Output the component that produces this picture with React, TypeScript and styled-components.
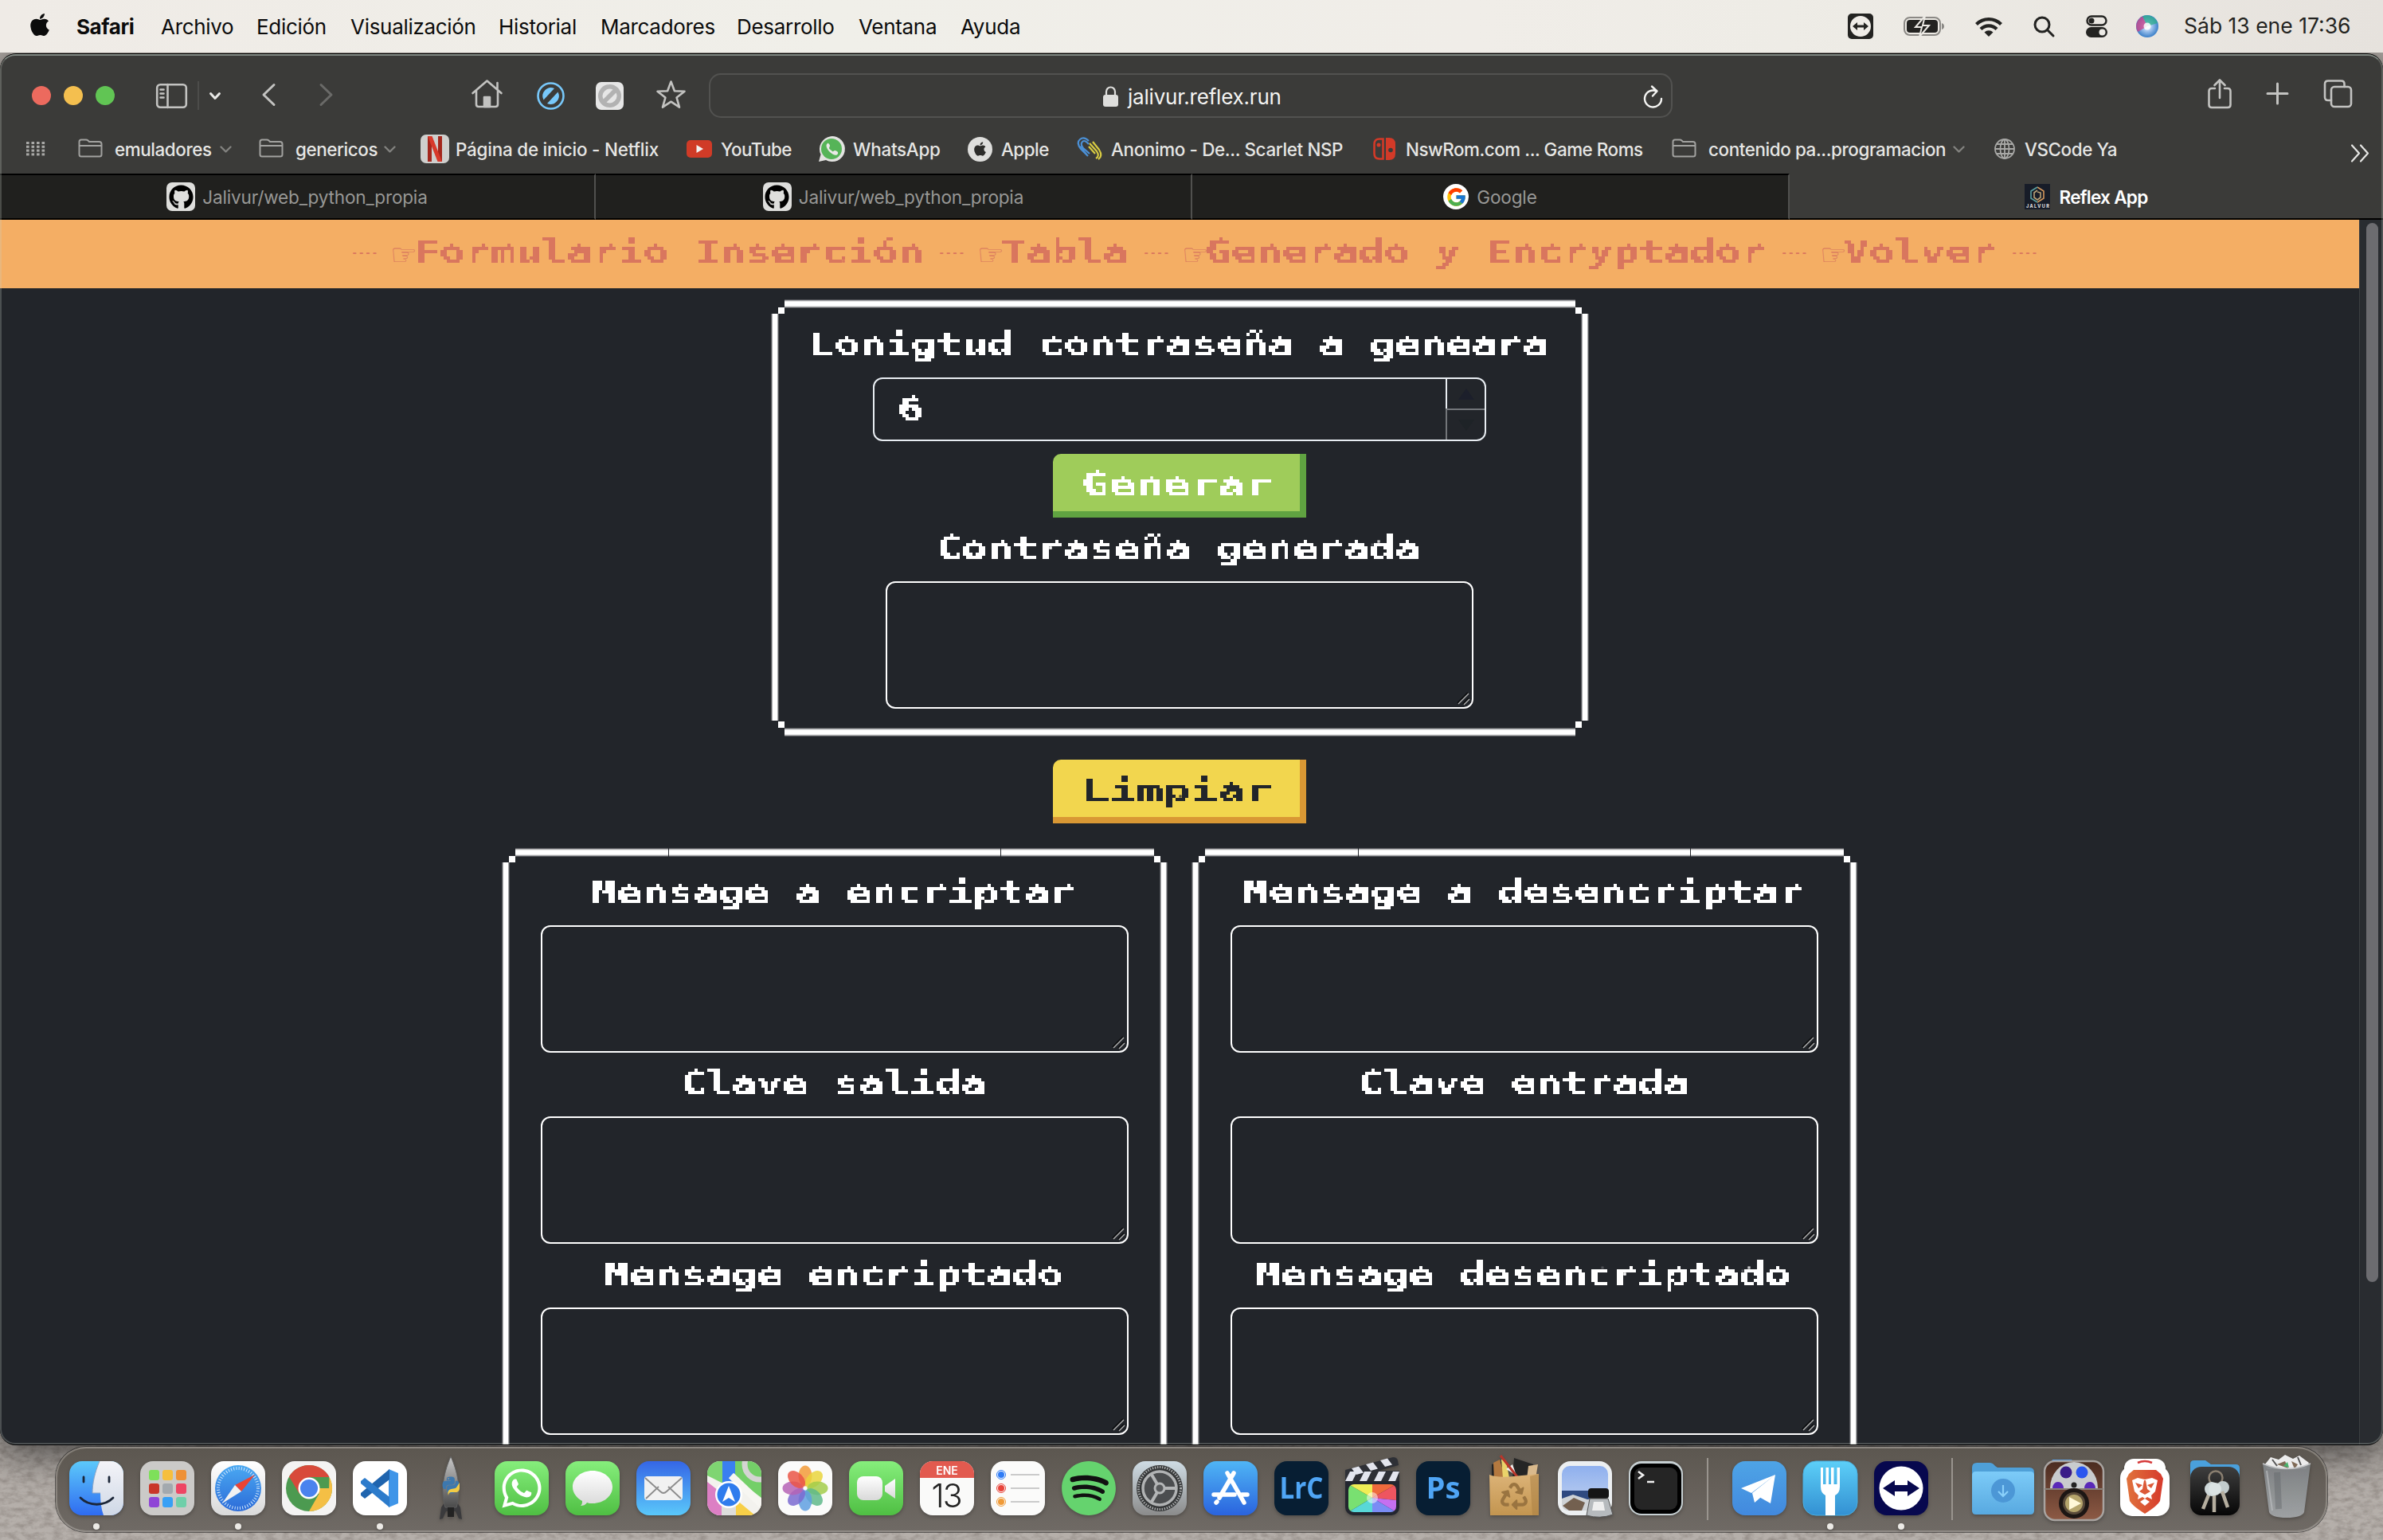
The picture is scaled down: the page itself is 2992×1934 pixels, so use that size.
import React from "react";
import styled, { createGlobalStyle } from "styled-components";
import { FaApple, FaGithub, FaWhatsapp, FaPython, FaSpotify, FaRecycle } from "react-icons/fa";
import { FcGoogle } from "react-icons/fc";

const Global = createGlobalStyle`
  * { box-sizing: border-box; }
  html, body { margin: 0; padding: 0; background: #8f8a85; }
  body { width: 2992px; height: 1934px; overflow: hidden; }
  svg { display: block; flex: none; overflow: visible; }
`;

/* ---------- desktop ---------- */

const Desktop = styled.div`
  position: relative;
  display: flex;
  flex-direction: column;
  width: 2992px;
  height: 1934px;
  overflow: hidden;
  background: #a29d98;
  font-family: Inter, "Liberation Sans", sans-serif;
`;

const Wallpaper = styled.svg`
  position: absolute;
  left: 0;
  top: 0;
  width: 2992px;
  height: 1934px;
`;

const MenuBar = styled.header`
  position: relative;
  z-index: 2;
  display: flex;
  align-items: center;
  flex: none;
  height: 66px;
  padding: 0 33px 0 34px;
  background: linear-gradient(90deg, #efebe6 0%, #f0efe9 35%, #f0ede8 62%, #eeece6 75%, #e6e2dd 100%);
  color: #0b0b0b;
  font-size: 26px;
`;

const MenuItem = styled.span<{ $w: number; $bold?: boolean }>`
  width: ${(p) => p.$w}px;
  font-weight: ${(p) => (p.$bold ? 700 : 400)};
  letter-spacing: ${(p) => (p.$bold ? -0.4 : -0.3)}px;
  white-space: nowrap;
`;

const AppleMark = styled.span`
  display: flex;
  width: 62px;
  padding-bottom: 4px;
`;

const Status = styled.div`
  display: flex;
  align-items: center;
  margin-left: auto;
  color: #232321;
`;

const StatusIcon = styled.span<{ $gap: number }>`
  display: flex;
  margin-right: ${(p) => p.$gap}px;
`;

const Clock = styled.span`
  width: 217px;
  padding-bottom: 2px;
  font-size: 26.5px;
  white-space: nowrap;
`;

/* ---------- browser window ---------- */

const Window = styled.section`
  position: relative;
  display: flex;
  flex-direction: column;
  flex: none;
  width: 2992px;
  height: 1748px;
  margin-top: 1px;
  border: 1px solid #000;
  border-width: 1px 0;
  border-radius: 20px;
  overflow: hidden;
  background: #3b3b39;
  box-shadow: 0 8px 50px 4px rgba(0, 0, 0, 0.6);
  &::after {
    content: "";
    position: absolute;
    inset: 0;
    border: 2px solid rgba(200, 210, 200, 0.25);
    border-top-color: rgba(200, 215, 205, 0.5);
    border-radius: 19px;
    pointer-events: none;
  }
`;

const Chrome = styled.div`
  display: flex;
  flex-direction: column;
  flex: none;
  height: 208px;
`;

const Toolbar = styled.div`
  display: flex;
  align-items: center;
  height: 104px;
  padding: 0 39px 0 40px;
  color: #c3c3c1;
`;

const Lights = styled.div`
  display: flex;
  gap: 16px;
  margin-right: 52px;
`;

const Light = styled.i<{ $c: string }>`
  width: 24px;
  height: 24px;
  border-radius: 50%;
  background: ${(p) => p.$c};
`;

const ToolDivider = styled.i`
  width: 2px;
  height: 36px;
  margin: 0 13px;
  background: #4c4c4a;
`;

const Tool = styled.span<{ $r: number; $c?: string; $up?: number }>`
  display: flex;
  margin-right: ${(p) => p.$r}px;
  padding-bottom: ${(p) => p.$up ?? 0}px;
  color: ${(p) => p.$c ?? "#c3c3c1"};
`;

const UrlField = styled.div`
  display: flex;
  align-items: center;
  width: 1210px;
  height: 56px;
  padding: 2px 10px 0 493px;
  border: 2px solid #525250;
  border-radius: 15px;
  color: #f4f4f2;
  font-size: 26px;
  letter-spacing: -0.2px;
`;

const UrlText = styled.span`
  flex: 1;
  padding-left: 12px;
`;

const RightTools = styled.div`
  display: flex;
  align-items: center;
  gap: 44px;
  margin-left: auto;
  padding-bottom: 5px;
`;

const Bookmarks = styled.div`
  display: flex;
  align-items: center;
  height: 30px;
  padding: 0 16px 0 33px;
  color: #e6e6e4;
  font-size: 22.4px;
  font-weight: 500;
`;

const Bookmark = styled.div<{ $w: number; $gap: number }>`
  display: flex;
  align-items: center;
  gap: ${(p) => p.$gap}px;
  width: ${(p) => p.$w}px;
  white-space: nowrap;
`;

const BookmarkLabel = styled.span<{ $ls?: number }>`
  margin-right: auto;
  letter-spacing: ${(p) => p.$ls ?? -0.25}px;
`;

const FolderLabel = styled.span<{ $w: number }>`
  width: ${(p) => p.$w}px;
  letter-spacing: -0.4px;
`;

const Overflow = styled.span`
  display: flex;
  margin-left: auto;
  padding-top: 10px;
`;

const Tabs = styled.div`
  display: grid;
  grid-template-columns: 748px 749px 750px 1fr;
  height: 58px;
  margin-top: auto;
`;

const Tab = styled.div<{ $active?: boolean; $gap?: number }>`
  display: flex;
  align-items: center;
  justify-content: center;
  gap: ${(p) => p.$gap ?? 9}px;
  border-top: 2px solid ${(p) => (p.$active ? "#3b3b39" : "#000")};
  border-bottom: 2px solid #000;
  border-right: ${(p) => (p.$active ? "0" : "2px solid #50504e")};
  background: ${(p) => (p.$active ? "#3b3b39" : "#20201e")};
  color: ${(p) => (p.$active ? "#ffffff" : "#979795")};
  font-size: 22.6px;
  font-weight: ${(p) => (p.$active ? 600 : 400)};
  letter-spacing: ${(p) => (p.$active ? -0.75 : -0.2)}px;
  white-space: nowrap;
`;

const TabBadge = styled.span<{ $round?: boolean }>`
  display: flex;
  align-items: center;
  justify-content: center;
  width: ${(p) => (p.$round ? 32 : 36)}px;
  height: ${(p) => (p.$round ? 32 : 36)}px;
  border-radius: ${(p) => (p.$round ? "50%" : "7px")};
  background: ${(p) => (p.$round ? "#fff" : "#dededc")};
  color: #000;
`;

const Viewport = styled.div`
  display: flex;
  flex: 1;
  min-height: 0;
`;

const ScrollTrack = styled.div`
  width: 30px;
  padding: 4px 6px 0 8px;
  background: #292c30;
  border-left: 1px solid #3b3e41;
`;

const ScrollThumb = styled.div`
  width: 15px;
  height: 1330px;
  border-radius: 8px;
  background: #6c6c70;
`;

/* ---------- page ---------- */

const Page = styled.main`
  display: flex;
  flex-direction: column;
  align-items: center;
  width: 2962px;
  overflow: hidden;
  background: #22252a;
`;

const Nav = styled.nav`
  display: flex;
  align-items: center;
  flex: none;
  width: 100%;
  height: 86px;
  margin-bottom: 14px;
  padding: 0 0 10px 424px;
  background: #f4ae64;
  color: #d9765e;
`;

const Dashes = styled.span`
  flex: none;
  width: 33px;
  margin: 8px 19px 0 17px;
  font: 700 14px "Liberation Mono", monospace;
  white-space: nowrap;
`;

const Hand = styled.span`
  flex: none;
  width: 31px;
  margin-left: -3px;
  padding-top: 12px;
  font: 38px/1 "DejaVu Sans", sans-serif;
`;

const PixelCell = styled.span<{ $n: number; $adv: number }>`
  display: flex;
  justify-content: center;
  flex: none;
  width: ${(p) => p.$n * p.$adv}px;
  height: 44px;
  margin-bottom: -4px;
  filter: url(#pixels);
`;

const PixelGlyphs = styled.span<{ $adv: number }>`
  flex: none;
  font: 700 38.4px/40px "DejaVu Sans Mono", "Liberation Mono", monospace;
  white-space: pre;
  transform: translate(-2px, 1.5px) scaleX(${(p) => p.$adv / 23.12});
`;

function Pixel({ children, adv = 32 }: { children: string; adv?: number }) {
  return (
    <PixelCell $n={children.length} $adv={adv}>
      <PixelGlyphs $adv={adv}>{children}</PixelGlyphs>
    </PixelCell>
  );
}

const hBar =
  "linear-gradient(180deg,#55575b 0 1px,#a8a9ab 1px 2px,#e4e4e4 2px 3px,#fff 3px 8px,#e4e4e4 8px 9px,#a8a9ab 9px 10px,#55575b 10px 11px)";
const vBar = "linear-gradient(90deg,#55575b 0 1px,#a8a9ab 1px 2px,#fff 2px 8px,#a8a9ab 8px 9px,#55575b 9px 10px)";
const dot = "linear-gradient(#fff,#fff)";
const seam = "linear-gradient(#22252a,#22252a)";

const Panel = styled.div<{ $w: number; $h: number; $seams?: boolean }>`
  display: flex;
  flex-direction: column;
  align-items: center;
  flex: none;
  width: ${(p) => p.$w}px;
  height: ${(p) => p.$h}px;
  padding-top: ${(p) => (p.$seams ? 17 : 18)}px;
  color: #fff;
  background-repeat: no-repeat;
  background-image: ${(p) => (p.$seams ? `${seam}, ${seam}, ` : "")}${dot}, ${dot}, ${dot}, ${dot}, ${hBar}, ${hBar}, ${vBar}, ${vBar};
  background-size: ${(p) => (p.$seams ? "1px 11px, 1px 11px, " : "")}8px 8px, 8px 8px, 8px 8px, 8px 8px,
    calc(100% - 34px) 11px, calc(100% - 34px) 11px, 10px calc(100% - 38px), 10px calc(100% - 38px);
  background-position: ${(p) => (p.$seams ? "left 209px top 0, left 626px top 0, " : "")}left 9px top 10px,
    right 9px top 10px, left 9px bottom 11px, right 9px bottom 11px, left 17px top 0, left 17px bottom 0,
    left 0 top 18px, right 0 top 18px;
`;

const Heading = styled.h3`
  flex: none;
  height: 40px;
  margin: 16px 0 24px;
`;

const NumberField = styled.div`
  display: grid;
  grid-template-columns: 1fr 49px;
  flex: none;
  width: 770px;
  height: 80px;
  border: 2px solid #e8edf2;
  border-radius: 12px;
  overflow: hidden;
`;

const NumberValue = styled.div`
  display: flex;
  align-items: center;
  padding: 0 0 4px 31px;
`;

const Steppers = styled.div`
  display: grid;
  grid-template-rows: 37px 1fr;
`;

const Stepper = styled.span<{ $dim?: boolean }>`
  display: flex;
  align-items: center;
  justify-content: center;
  border-left: 2px solid ${(p) => (p.$dim ? "#73767a" : "#e8edf2")};
  border-top: ${(p) => (p.$dim ? "2px solid #73767a" : "0")};
`;

const PixelButton = styled.button<{ $bg: string; $edge: string; $fg: string; $m: string }>`
  display: flex;
  align-items: center;
  justify-content: center;
  flex: none;
  width: 318px;
  height: 80px;
  margin: ${(p) => p.$m};
  padding: 0 4px 8px 0;
  border: 0;
  border-radius: 10px 0 0 0;
  background: ${(p) => p.$bg};
  color: ${(p) => p.$fg};
  box-shadow: inset -8px -8px 0 ${(p) => p.$edge};
`;

const TextBox = styled.div`
  display: flex;
  align-items: flex-end;
  justify-content: flex-end;
  flex: none;
  width: 738px;
  height: 160px;
  padding: 1px;
  border: 2px solid #fff;
  border-radius: 12px;
`;

const Columns = styled.div`
  display: flex;
  gap: 30px;
`;

/* ---------- dock ---------- */

const Dock = styled.footer`
  position: relative;
  display: flex;
  flex: none;
  width: 2852px;
  height: 107px;
  margin: 2px 0 0 70px;
  padding-left: 4px;
  border: 2px solid rgba(165, 160, 152, 0.55);
  border-bottom-color: rgba(150, 146, 140, 0.9);
  border-radius: 38px;
  background: linear-gradient(180deg, #5c5750 0%, #66605a 50%, #6f6a65 100%);
  box-shadow: 0 0 0 1px rgba(20, 20, 20, 0.55);
`;

const Slot = styled.div`
  display: flex;
  flex-direction: column;
  align-items: center;
  flex: none;
  width: 89px;
  padding-top: 16px;
  filter: drop-shadow(0 2px 2px rgba(0, 0, 0, 0.25));
`;

const RunDot = styled.i`
  width: 8px;
  height: 8px;
  margin-top: 10px;
  border-radius: 50%;
  background: #eceae6;
`;

const DockRule = styled.i<{ $w: number }>`
  display: flex;
  justify-content: center;
  flex: none;
  width: ${(p) => p.$w}px;
  padding-top: 12px;
  &::before {
    content: "";
    width: 2px;
    height: 78px;
    background: #99948e;
  }
`;

/* ---------- drawings ---------- */

type Kids = { children?: React.ReactNode };

const Line = ({ w, h, sw = 2.6, children }: Kids & { w: number; h: number; sw?: number }) => (
  <svg width={w} height={h} viewBox={`0 0 ${w} ${h}`} fill="none" stroke="currentColor" strokeWidth={sw} strokeLinecap="round" strokeLinejoin="round">
    {children}
  </svg>
);

const FolderIcon = () => (
  <svg width="31" height="24" viewBox="0 0 31 24" fill="none" stroke="#a2a2a0" strokeWidth="2">
    <path d="M1.500 20V4q0-2.500 2.500-2.500h6q1.500 0 2.500 1l1.500 1.500h12.500q3 0 3 3V20q0 2.500-2.500 2.500H4q-2.500 0-2.500-2.500zM1.500 9h28" />
  </svg>
);

const Chevron = () => (
  <svg width="15" height="9" viewBox="0 0 15 9" fill="none" stroke="#82827f" strokeWidth="2.400" strokeLinecap="round" strokeLinejoin="round">
    <path d="M1.500 1.500l6 6 6-6" />
  </svg>
);

const Grip = () => (
  <svg width="18" height="18" viewBox="0 0 18 18" strokeWidth="1.400">
    <path d="M1 14L14 1M8 15L15 8" stroke="#0c0d0f" strokeWidth="2" />
    <path d="M2 15L15 2M9 16L16 9" stroke="#b6b6b6" />
  </svg>
);

const Tile = ({ fill, stroke, children }: Kids & { fill: string; stroke?: string }) => (
  <svg width="68" height="68" viewBox="0 0 68 68">
    <rect width="68" height="68" rx="16" fill={fill} stroke={stroke} />
    {children}
  </svg>
);

const ramps = [
  ["gGreen", "#86ee7c", "#4fbf43"], ["gBlue", "#3566e6", "#5ac8fa"], ["gSky", "#5cc9fb", "#2f6bf0"], ["gSafari", "#4aa9f2", "#2c6bd8"],
  ["gWhite", "#ffffff", "#d9d9d9"], ["gStore", "#4fb5f5", "#2a63de"], ["gGear", "#cfdce4", "#8b8b8b"], ["gTele", "#4ea4e6", "#4289de"],
  ["gFork", "#5ccff8", "#3390d2"], ["gBrown", "#4a2b20", "#8d5a45"], ["gKeys", "#3e3e3e", "#060606"], ["gBag", "#dcb377", "#c39550"],
  ["gFolder", "#7ccbf8", "#58a9e0"], ["gFace", "#f4f4f8", "#cfd8e6"], ["gSea", "#8fb0ee", "#c4d4f0"], ["gSteel", "#7f8386", "#a2a5a7"],
  ["gRocket", "#c9c9c9", "#4a4a4a"],
];

const Defs = () => (
  <defs>
    {ramps.map(([id, a, b]) => (
      <linearGradient key={id} id={id} x1="0" y1="0" x2="0" y2="1">
        <stop offset="0" stopColor={a} />
        <stop offset="1" stopColor={b} />
      </linearGradient>
    ))}
    <linearGradient id="gBrave" x1="0" y1="0" x2="1" y2="0">
      <stop offset="0" stopColor="#e0733c" />
      <stop offset="1" stopColor="#d63a2c" />
    </linearGradient>
    <radialGradient id="gSiri">
      <stop offset="0" stopColor="#fff" />
      <stop offset=".4" stopColor="#a8c8f0" />
      <stop offset="1" stopColor="#3a7fc8" />
    </radialGradient>
    <clipPath id="tile"><rect width="68" height="68" rx="16" /></clipPath>
    <clipPath id="fcp"><rect x="4" y="29" width="60" height="35" rx="7" /></clipPath>
    <filter id="grain" x="0" y="0" width="100%" height="100%">
      <feTurbulence type="fractalNoise" baseFrequency="0.09 0.16" numOctaves="4" seed="5" />
      <feColorMatrix values="0 0 0 0 0.25  0 0 0 0 0.22  0 0 0 0 0.20  0.9 0.9 0 0 -0.72" />
    </filter>
    {/* Snaps the lettering to the 4px blocks of an 8-bit typeface. */}
    <filter id="pixels" x="0" y="0" width="1" height="1" colorInterpolationFilters="sRGB">
      <feGaussianBlur in="SourceGraphic" stdDeviation="0.7" result="soft" />
      <feFlood x="1" y="1" width="1" height="1" floodColor="#000" result="point" />
      <feComposite in="point" in2="point" operator="over" x="0" y="0" width="4" height="4" />
      <feTile result="grid" />
      <feComposite in="soft" in2="grid" operator="in" />
      <feComponentTransfer><feFuncA type="linear" slope="60" intercept="-27" /></feComponentTransfer>
      <feMorphology operator="dilate" radius="1" result="block" />
      <feOffset in="block" dx="1" dy="0" result="right" />
      <feOffset in="block" dx="0" dy="1" result="down" />
      <feOffset in="block" dx="1" dy="1" result="diag" />
      <feMerge>
        <feMergeNode in="block" />
        <feMergeNode in="right" />
        <feMergeNode in="down" />
        <feMergeNode in="diag" />
      </feMerge>
    </filter>
  </defs>
);

const Finder = () => (
  <Tile fill="url(#gSky)">
    <g clipPath="url(#tile)"><path d="M38 0C32 14 29 28 29 40h10c0 10 1 20 4 28h25V0z" fill="url(#gFace)" /></g>
    <path d="M38 0C32 14 29 28 29 40h10" fill="none" stroke="#8fa6c4" />
    <path d="M18 20v6M50 20v6M14 46c11 11 30 11 41 0" fill="none" stroke="#1b2638" strokeWidth="2.800" strokeLinecap="round" />
  </Tile>
);
const Launchpad = () => (
  <Tile fill="#cbcac8">
    {["#7ee05a", "#f6bf3e", "#ee9136", "#c93628", "#a3a9ae", "#ee4563", "#8f45d6", "#37a0f5", "#6fcfa9"].map((c, i) => (
      <rect key={c} x={11 + (i % 3) * 17} y={11 + Math.floor(i / 3) * 17} width="13" height="13" rx="3" fill={c} />
    ))}
  </Tile>
);
const Safari = () => (
  <Tile fill="url(#gWhite)">
    <circle cx="34" cy="34" r="29" fill="url(#gSafari)" />
    <circle cx="34" cy="34" r="25" fill="none" stroke="#cfe6fb" strokeWidth="4" strokeDasharray="1 2.270" />
    <path d="M55 17L38 38 30 30z" fill="#ea4335" />
    <path d="M14 53L38 38 30 30z" fill="#f2f2f2" />
  </Tile>
);
const ChromeIcon = () => (
  <Tile fill="#f4f3f2">
    <circle cx="34" cy="34" r="29" fill="#4c9a50" />
    <path d="M34 34h25.100L59.500 20A29 29 0 0 1 34 63l12.500-22z" fill="#f4bf45" />
    <path d="M34 20h25.500A29 29 0 0 0 9 19.500L22 41z" fill="#d84a3a" />
    <circle cx="34" cy="34" r="13.500" fill="#fff" />
    <circle cx="34" cy="34" r="11" fill="#4a83ee" />
  </Tile>
);
const Code = () => (
  <Tile fill="#fff">
    <path d="M45 10L57 15V53L45 58z" fill="#3f95e8" />
    <path d="M46 10v13L15 47l-5-4V40z" fill="#1f64ae" />
    <path d="M46 58V45L15 21l-5 4v3z" fill="#2c7bcb" />
  </Tile>
);
const Rocket = () => (
  <svg width="68" height="68" viewBox="0 0 68 68">
    <path d="M22 58l-2 15 4-1 4-9h12l4 9 4 1-2-15-6-9H28z" fill="#3a3a3c" />
    <path d="M34-6C26 12 20 36 27 58h14C48 36 42 12 34-6z" fill="url(#gRocket)" stroke="#5f5f5f" />
    <g transform="translate(22 18)"><FaPython size={24} color="#3d78ae" /></g>
    <path d="M45 27v7c0 3-2 5-5 5h-5c-3 0-4 2-4 4-1-3-1-5 1-7 3-2 8-1 9-3z" fill="#f2cb45" />
    <path d="M30 58h8v12h-8z" fill="#222" />
  </svg>
);
const WhatsApp = () => (
  <Tile fill="url(#gGreen)"><g transform="translate(6 6)"><FaWhatsapp size={56} color="#fff" /></g></Tile>
);
const Messages = () => (
  <Tile fill="url(#gGreen)">
    <path d="M34 12c14 0 25 9 25 20.500S48 53 34 53c-3 0-5 0-7-1-2 3-5 4-8 4 2-2 2-4 2-6C14 46 9 40 9 32.500 9 21 20 12 34 12z" fill="url(#gWhite)" />
  </Tile>
);
const Mail = () => (
  <Tile fill="url(#gBlue)">
    <rect x="10" y="19" width="48" height="30" rx="4" fill="#f1f1f1" />
    <path d="M12 47l16-15M56 47L40 32M11 21l19 17q4 4 8 0l19-17" fill="none" stroke="#8c8c8c" strokeWidth="1.800" />
  </Tile>
);
const Maps = () => (
  <Tile fill="#f3f2ee">
    <g clipPath="url(#tile)">
      <path d="M0 0h20v28L0 18z" fill="#7fd572" />
      <path d="M34 0h34v46L34 20z" fill="#74cf68" />
      <path d="M0 26l18 14v28H0z" fill="#dc7fc4" />
      <path d="M36 48l24 20H36z" fill="#f7cf48" />
      <path d="M18 40h18v28H18z" fill="#dddddb" />
      <path d="M19 0h16v30H19z" fill="#3a7ff0" />
      <circle cx="66" cy="4" r="19" fill="none" stroke="#d4d4d2" strokeWidth="7" />
      <path d="M30 18l42 40" stroke="#f7f6f2" strokeWidth="9" />
    </g>
    <circle cx="27" cy="42" r="17" fill="#fff" />
    <circle cx="27" cy="42" r="14.500" fill="#2f7ced" />
    <path d="M27 31l8 20-8-5-8 5z" fill="#fff" />
  </Tile>
);
const Photos = () => (
  <Tile fill="#fbfbfa">
    {["#f29b38", "#e9d53c", "#a3cc4a", "#5fb98a", "#5f9fe0", "#7a6ad0", "#b563b5", "#ea5545"].map((c, i) => (
      <ellipse key={c} cx="34" cy="18.500" rx="8.500" ry="13" fill={c} opacity=".85" transform={`rotate(${i * 45} 34 34)`} />
    ))}
  </Tile>
);
const FaceTime = () => (
  <Tile fill="url(#gGreen)">
    <rect x="10" y="19" width="32" height="30" rx="8" fill="url(#gWhite)" />
    <path d="M45 31l13-9v25l-13-9z" fill="url(#gWhite)" />
  </Tile>
);
const Calendar = () => (
  <Tile fill="#fafaf9">
    <g clipPath="url(#tile)"><rect width="68" height="21" fill="#e25a4f" /></g>
    <text x="34" y="16.500" fill="#fff" fontSize="14" fontWeight="600" textAnchor="middle" fontFamily="Inter">ENE</text>
    <text x="33" y="58" fill="#222" fontSize="41" fontWeight="300" textAnchor="middle" fontFamily="Inter" letterSpacing="-2">13</text>
  </Tile>
);
const Reminders = () => (
  <Tile fill="#fbfbfa">
    {["#2f7cf6", "#e8443a", "#f09a37"].map((c, i) => (
      <g key={c}>
        <circle cx="13" cy={17 + i * 17} r="4" fill={c} />
        <circle cx="13" cy={17 + i * 17} r="5.500" fill="none" stroke={c} />
        <path d={`M25 ${17 + i * 17}h36`} stroke="#bbb" strokeWidth="1.600" />
      </g>
    ))}
  </Tile>
);
const Spotify = () => (
  <svg width="68" height="68" viewBox="0 0 68 68">
    <circle cx="34" cy="34" r="33" fill="#111" />
    <g transform="translate(-1 -1)"><FaSpotify size={70} color="#65d36e" /></g>
  </svg>
);
const Settings = () => (
  <Tile fill="url(#gGear)">
    <circle cx="34" cy="34" r="29" fill="#333536" />
    <circle cx="34" cy="34" r="26.500" fill="none" stroke="#a7a9aa" strokeWidth="3" strokeDasharray="1.500 1.600" />
    <circle cx="34" cy="34" r="21" fill="#4b4d4f" stroke="#b0b2b3" strokeWidth="3.500" />
    <path d="M34 34h20M34 34L24 17M34 34L24 51" stroke="#b4b6b7" strokeWidth="4" />
    <circle cx="34" cy="34" r="6" fill="#585a5c" stroke="#b4b6b7" strokeWidth="3" />
  </Tile>
);
const AppStore = () => (
  <Tile fill="url(#gStore)">
    <path d="M38 15L20 46M30 15l21 37M13 42h26M48 42h7M17 51l-1 1" stroke="#fff" strokeWidth="5.500" strokeLinecap="round" />
  </Tile>
);
const Adobe = ({ label }: { label: string }) => (
  <Tile fill="#071e33">
    <text x="34" y="47" fill="#4fa5f5" fontSize="38" fontWeight="700" textAnchor="middle" fontFamily="Open Sans" textLength={label.length === 3 ? 55 : 43} lengthAdjust="spacingAndGlyphs">
      {label}
    </text>
  </Tile>
);
const FinalCut = () => (
  <svg width="68" height="68" viewBox="0 0 68 68">
    <rect y="12" width="68" height="56" rx="10" fill="#23262f" />
    <path d="M0 11L60-5q5 0 6 4l1 6L3 23z" fill="#2e3036" />
    <path d="M0 12h68v13H0z" fill="#2e3036" />
    <path d="M8 9l9-2.500 6 8-9 2.500zM26 4l9-2.500 6 8-9 2.500zM44-1l9-2.500 6 8-9 2.500zM6 13h9l-6 12H0zM24 13h9l-6 12h-9zM42 13h9l-6 12h-9zM60 13h8l-5 12h-9z" fill="#e3e5ee" />
    <g clipPath="url(#fcp)">
      <path d="M34 46L4 29v35z" fill="#79e071" /><path d="M34 46L4 29h30z" fill="#f0ee55" /><path d="M34 46V29h30z" fill="#ef6a3c" />
      <path d="M34 46l30-17v20z" fill="#ee5560" /><path d="M34 46l30 3v15z" fill="#c56ff0" /><path d="M34 46l30 18H34z" fill="#7a8cf5" />
      <path d="M34 46v18H4z" fill="#58d8d8" />
      <circle cx="34" cy="46" r="7" fill="#fff" opacity=".5" />
    </g>
  </svg>
);
const Bag = () => (
  <svg width="68" height="68" viewBox="0 0 68 68">
    <path d="M6 4l12-3 4 20H6zM34-4l24 8-4 18H32z" fill="#252525" />
    <path d="M8 2l8-4 7 24H9z" fill="#b4793f" /><path d="M18-2l6 1 4 22h-8z" fill="#ead36a" />
    <path d="M24 10l8-6 5 14z" fill="#f0f0f0" /><path d="M52 6l12-2-3 18H50z" fill="#d9b98c" />
    <path d="M17-7l22 28" stroke="#b9362b" strokeWidth="3" />
    <path d="M3 17q10 4 31 2t31-3v52H4z" fill="url(#gBag)" />
    <path d="M54 19l11-3v52h-8z" fill="#a87d42" opacity=".5" />
    <g transform="translate(17 27)"><FaRecycle size={34} color="#9a7440" /></g>
  </svg>
);
const Preview = () => (
  <Tile fill="#eceff1">
    <rect x="5" y="6" width="58" height="56" rx="10" fill="url(#gSea)" />
    <rect x="5" y="37" width="58" height="12" fill="#2f4a80" />
    <path d="M5 47l14-5 18 6 26-3v8q0 9-9 9H14q-9 0-9-9z" fill="#cfd3d6" />
    <path d="M6 56l14-10 14 6-4 10H14z" fill="#73604f" />
    <rect x="38" y="34" width="26" height="13" rx="4" fill="#151515" />
    <path d="M40 47h23l6 20q-16 6-33 1z" fill="#b6babd" stroke="#555" />
    <path d="M45 51h12l2 11H43z" fill="#eee" />
  </Tile>
);
const Terminal = () => (
  <Tile fill="#c7d0d3">
    <rect x="2" y="3" width="64" height="63" rx="14" fill="#000" />
    <rect x="7" y="8" width="54" height="53" rx="9" fill="#252525" />
    <path d="M12 13l6 4.500-6 4.500M23 26h9" fill="none" stroke="#f2f2f2" strokeWidth="2.600" />
  </Tile>
);
const Telegram = () => (
  <Tile fill="url(#gTele)">
    <path d="M54 17L11 34l13 6zM54 17L25 40l23 13zM54 17L25 40l3 12 7-6z" fill="#fff" />
  </Tile>
);
const Fork = () => (
  <Tile fill="url(#gFork)" stroke="#4ab0e2">
    <path d="M22 8v24q0 8 6 11V68h12V43q6-3 6-11V8h-3.500v21h-4V8h-3.500v21h-3V8h-3.500v21h-3.500V8z" fill="#fff" />
  </Tile>
);
const Viewer = () => (
  <Tile fill="#07084e">
    <circle cx="34" cy="34" r="27.500" fill="#fff" />
    <path d="M11 34l15-10v6h16v-6l15 10-15 10v-6H26v6z" fill="#07084e" />
  </Tile>
);
const Downloads = () => (
  <svg width="78" height="68" viewBox="0 0 78 68">
    <path d="M0 62V8q0-6 6-6h16q4 0 7 4l3 2h40q6 0 6 6v48z" fill="#4fa0d8" />
    <path d="M0 18q0-5 5-5h68q5 0 5 5v44q0 5-5 5H5q-5 0-5-5z" fill="url(#gFolder)" />
    <circle cx="39" cy="37" r="15" fill="#4c97d6" />
    <path d="M39 30v13m-6-5l6 6 6-6" fill="none" stroke="#8ad0fa" strokeWidth="2.200" />
  </svg>
);
const Film = () => (
  <svg width="74" height="68" viewBox="0 0 74 68">
    <path d="M10-2h24l4 5H8z" fill="#4b9ff0" />
    <rect width="74" height="74" rx="13" fill="url(#gBrown)" stroke="#a8a3a0" strokeWidth="2.500" />
    <path d="M7 34a30 33 0 0 1 60 0z" fill="#c9ccce" />
    <circle cx="27" cy="14" r="7.500" fill="#3a1c88" /><circle cx="47" cy="14" r="7.500" fill="#2a55ee" />
    <path d="M10 34a7 8 0 0 1 14 0zM50 34a7 8 0 0 1 14 0z" fill="#5a29b8" /><circle cx="37" cy="30" r="3.500" fill="#222" />
    <path d="M0 35h74" stroke="#888078" strokeWidth="2" />
    <circle cx="37" cy="53" r="19" fill="#1d1614" /><circle cx="37" cy="53" r="14" fill="#5a4b3a" /><circle cx="37" cy="53" r="11" fill="#b6a56c" />
    <path d="M31 45l15 8-15 8z" fill="#fff8d8" />
  </svg>
);
const Brave = () => (
  <svg width="62" height="68" viewBox="0 0 62 68">
    <rect x="5" y="-3" width="52" height="40" rx="12" fill="#fff" />
    <path d="M22 2q9-4 18 0" stroke="#d63a3a" strokeWidth="2.500" fill="none" />
    <rect y="6" width="62" height="63" rx="15" fill="#fff" />
    <path d="M17 11h28l6 5 3 6-4 28q-3 6-19 16Q15 56 12 50L8 22l3-6z" fill="url(#gBrave)" />
    <path d="M15 24l7-3 9 2 9-2 7 3-3 14-5 5 1 5-6-3-3 2-3-2-6 3 1-5-5-5zM25 51l6-4 6 4-6 5z" fill="#fff" />
    <path d="M19 27l9 3-5 4zM43 27l-9 3 5 4zM30 24h2l2 11 4 3-7 4-7-4 4-3z" fill="#dc5a38" />
  </svg>
);
const Keys = () => (
  <svg width="63" height="68" viewBox="0 0 63 68">
    <path d="M0 50V4q0-5 5-5h14l7 5h31q5 0 5 5v41z" fill="#4aa0dc" />
    <rect y="7" width="62" height="61" rx="14" fill="url(#gKeys)" />
    <circle cx="32" cy="21" r="8.500" fill="none" stroke="#8a7f70" strokeWidth="2.500" />
    <circle cx="41" cy="33" r="8" fill="#c2cccd" />
    <path d="M24 40l-8 20M30 42v22M40 38l7 20" stroke="#b5ae9f" strokeWidth="4.500" />
    <circle cx="27" cy="35" r="9" fill="#cfd9da" /><circle cx="31" cy="35" r="8" fill="#dbe3e3" />
  </svg>
);
const Trash = () => (
  <svg width="60" height="68" viewBox="0 0 60 68">
    <path d="M2 5l8-10 10 3 8-6 10 5 8-4 12 9-4 8H6z" fill="#ececec" />
    <path d="M18 4l10-4 4 9zM36 0l8 4-4 6z" fill="#7f6a56" /><path d="M26 6l5-5 2 7z" fill="#48b06a" />
    <path d="M12-2l6 8M44-5l4 10" stroke="#555" strokeWidth="2" />
    <path d="M0 3q30 13 60 0L52 64q-3 7-22 7T8 64z" fill="url(#gSteel)" opacity=".95" />
    <path d="M0 3q30 13 60 0" stroke="#c4c6c8" strokeWidth="1.500" fill="none" />
    <path d="M5 12L12 62" stroke="#c0c2c4" strokeWidth="2" opacity=".6" />
    <path d="M18 14l2 46" stroke="#5f6366" strokeWidth="8" opacity=".4" />
  </svg>
);

/* ---------- composed parts ---------- */

const NavLink = ({ children }: { children: string }) => (
  <>
    <Dashes>----</Dashes>
    <Hand>☞</Hand>
    <Pixel>{children}</Pixel>
  </>
);

const Field = ({ label }: { label: string }) => (
  <>
    <Heading><Pixel>{label}</Pixel></Heading>
    <TextBox><Grip /></TextBox>
  </>
);

const FolderMark = ({ label, w, tw }: { label: string; w: number; tw: number }) => (
  <Bookmark $w={w} $gap={0}>
    <Tool $r={15} $up={2}><FolderIcon /></Tool>
    <FolderLabel $w={tw}>{label}</FolderLabel>
    <Chevron />
  </Bookmark>
);

const SiteMark = ({ label, w, gap, ls, icon }: { label: string; w: number; gap: number; ls?: number; icon: React.ReactNode }) => (
  <Bookmark $w={w} $gap={gap}>
    {icon}
    <BookmarkLabel $ls={ls}>{label}</BookmarkLabel>
  </Bookmark>
);

const GitHubTab = () => (
  <Tab>
    <TabBadge><FaGithub size={31} /></TabBadge>
    Jalivur/web_python_propia
  </Tab>
);

type App = { icon: React.ReactNode; running?: boolean };

const mainApps: App[] = [
  { icon: <Finder />, running: true }, { icon: <Launchpad /> }, { icon: <Safari />, running: true }, { icon: <ChromeIcon /> },
  { icon: <Code />, running: true }, { icon: <Rocket /> }, { icon: <WhatsApp /> }, { icon: <Messages /> }, { icon: <Mail /> },
  { icon: <Maps /> }, { icon: <Photos /> }, { icon: <FaceTime /> }, { icon: <Calendar /> }, { icon: <Reminders /> }, { icon: <Spotify /> },
  { icon: <Settings /> }, { icon: <AppStore /> }, { icon: <Adobe label="LrC" /> }, { icon: <FinalCut /> }, { icon: <Adobe label="Ps" /> },
  { icon: <Bag /> }, { icon: <Preview /> }, { icon: <Terminal /> },
];
const recentApps: App[] = [{ icon: <Telegram /> }, { icon: <Fork />, running: true }, { icon: <Viewer />, running: true }];
const stacks: App[] = [{ icon: <Downloads /> }, { icon: <Film /> }, { icon: <Brave /> }, { icon: <Keys /> }, { icon: <Trash /> }];

const slots = (apps: App[]) =>
  apps.map((a, i) => (
    <Slot key={i}>
      {a.icon}
      {a.running && <RunDot />}
    </Slot>
  ));

export default function App() {
  return (
    <Desktop>
      <Global />
      <Wallpaper>
        <Defs />
        <rect width="2992" height="1934" fill="#b5afaa" />
        <rect y="1780" width="2992" height="154" filter="url(#grain)" />
      </Wallpaper>

      <MenuBar>
        <AppleMark><FaApple size={32} /></AppleMark>
        <MenuItem $w={106} $bold>Safari</MenuItem>
        <MenuItem $w={120}>Archivo</MenuItem>
        <MenuItem $w={118}>Edición</MenuItem>
        <MenuItem $w={186}>Visualización</MenuItem>
        <MenuItem $w={128}>Historial</MenuItem>
        <MenuItem $w={171}>Marcadores</MenuItem>
        <MenuItem $w={153}>Desarrollo</MenuItem>
        <MenuItem $w={128}>Ventana</MenuItem>
        <MenuItem $w={90}>Ayuda</MenuItem>
        <Status>
          <StatusIcon $gap={38}>
            <svg width="32" height="32" viewBox="0 0 32 32">
              <rect width="32" height="32" rx="5" fill="#232321" />
              <circle cx="16" cy="16" r="13" fill="#efece7" />
              <path d="M6 16l6-5v3.500h8V11l6 5-6 5v-3.500h-8V21z" fill="#232321" />
            </svg>
          </StatusIcon>
          <StatusIcon $gap={38}>
            <svg width="52" height="24" viewBox="0 0 52 24">
              <rect x="1" y="1" width="45" height="22" rx="7" fill="none" stroke="#8b8985" strokeWidth="2" />
              <rect x="4" y="4" width="39" height="16" rx="4" fill="#232321" />
              <path d="M48 8q3 1 3 4t-3 4z" fill="#8b8985" />
              <path d="M27-1L15 13h8l-3 12 12-14h-8z" fill="#232321" stroke="#eceae5" strokeWidth="2" />
            </svg>
          </StatusIcon>
          <StatusIcon $gap={39}>
            <svg width="34" height="25" viewBox="0 0 34 25" fill="none" stroke="#232321" strokeWidth="4.200">
              <path d="M1.500 9.500a22 22 0 0 1 31 0M7 15.500a14 14 0 0 1 20 0" />
              <path d="M17 25l-5.500-5.500a8 8 0 0 1 11 0z" fill="#232321" stroke="none" />
            </svg>
          </StatusIcon>
          <StatusIcon $gap={39}>
            <Line w={27} h={26} sw={3}><circle cx="11" cy="11" r="9" /><path d="M18 18l7 7" /></Line>
          </StatusIcon>
          <StatusIcon $gap={36}>
            <svg width="27" height="28" viewBox="0 0 27 28">
              <rect x="1.500" y="1.500" width="24" height="11" rx="5.500" fill="none" stroke="#232321" strokeWidth="2.400" />
              <circle cx="7" cy="7" r="3.500" fill="#232321" />
              <rect y="15" width="27" height="13" rx="6.500" fill="#232321" />
              <circle cx="20.500" cy="21.500" r="4" fill="#eceae5" />
            </svg>
          </StatusIcon>
          <StatusIcon $gap={32}>
            <svg width="28" height="28" viewBox="0 0 28 28">
              <circle cx="14" cy="14" r="14" fill="url(#gSiri)" />
              <path d="M8 1.400A14 14 0 0 1 27 10L14 14z" fill="#2fae8c" opacity=".75" />
              <path d="M2 21A14 14 0 0 1 8 1.400L14 14z" fill="#cf3f86" opacity=".75" />
              <circle cx="14" cy="14" r="4.500" fill="#fff" opacity=".85" />
            </svg>
          </StatusIcon>
          <Clock>Sáb 13 ene 17:36</Clock>
        </Status>
      </MenuBar>

      <Window>
        <Chrome>
          <Toolbar>
            <Lights><Light $c="#ec6a5e" /><Light $c="#f4bf4f" /><Light $c="#61c554" /></Lights>
            <Line w={39} h={31}><rect x="1.200" y="1.200" width="36.600" height="28.600" rx="4" /><path d="M14.500 1v29M5.500 7.500h4M5.500 12.500h4M5.500 17.500h4" /></Line>
            <ToolDivider />
            <Tool $r={52} $c="#e8e8e6"><Line w={14} h={9} sw={3}><path d="M1.500 1.500L7 7.500l5.500-6" /></Line></Tool>
            <Tool $r={55} $up={2}><Line w={17} h={28} sw={3}><path d="M15 1.500L2 14l13 12.500" /></Line></Tool>
            <Tool $r={174} $up={2} $c="#6a6a68"><Line w={17} h={28} sw={3}><path d="M2 1.500L15 14 2 26.500" /></Line></Tool>
            <Tool $r={43} $up={5}>
              <Line w={39} h={35}>
                <path d="M1.500 17L19.500 1.500 37.500 17M6 14v17q0 3 3 3h21q3 0 3-3V14M32.500 12V4" />
                <path d="M16 34V22h7v12z" fill="currentColor" />
              </Line>
            </Tool>
            <Tool $r={39}>
              <svg width="35" height="35" viewBox="0 0 35 35" fill="none" stroke="#78c8fa" strokeWidth="2.600">
                <circle cx="17.500" cy="17.500" r="16" />
                <path d="M8.500 22.500A10.500 10.500 0 0 1 22 8zM26.500 12.500A10.500 10.500 0 0 1 13 27z" fill="#78c8fa" stroke="none" />
              </svg>
            </Tool>
            <Tool $r={41}>
              <svg width="35" height="35" viewBox="0 0 35 35">
                <rect width="35" height="35" rx="7" fill="#e6e6e6" />
                <circle cx="17.500" cy="17.500" r="14.500" fill="#b2b2b2" />
                <path d="M9.500 21.500A9 9 0 0 1 21.500 9.500zM25.500 13.500A9 9 0 0 1 13.500 25.500z" fill="#e6e6e6" />
              </svg>
            </Tool>
            <Tool $r={29} $up={4}>
              <Line w={37} h={35}><path d="M18.500 1.500l4.400 11.800 12.600.5-9.900 7.800 3.400 12.100-10.500-7-10.500 7 3.400-12.100-9.900-7.800 12.600-.5z" /></Line>
            </Tool>
            <UrlField>
              <svg width="19" height="26" viewBox="0 0 19 26">
                <rect y="11" width="19" height="15" rx="3" fill="#dededc" />
                <path d="M4 12V7a5.500 5.500 0 0 1 11 0v5" fill="none" stroke="#dededc" strokeWidth="2.200" />
              </svg>
              <UrlText>jalivur.reflex.run</UrlText>
              <Line w={25} h={28} sw={2.4}><path d="M17 7.500A10.500 10.500 0 1 0 23 17M11 1.500l6.500 6-5.500 6" /></Line>
            </UrlField>
            <RightTools>
              <Line w={30} h={38}><path d="M9 12H5q-3.500 0-3.500 3.500v17Q1.500 36 5 36h20q3.500 0 3.500-3.500v-17Q28.500 12 25 12h-4M15 24V2M8.500 8L15 1.500 21.500 8" /></Line>
              <Line w={27} h={27} sw={3}><path d="M13.500 1v25M1 13.500h25" /></Line>
              <Line w={36} h={35}><rect x="10" y="9" width="25" height="25" rx="4" /><path d="M10 26H6q-4 0-4-4V5.500q0-4 4-4h16.500q4 0 4 4V9" /></Line>
            </RightTools>
          </Toolbar>

          <Bookmarks>
            <Tool $r={41}>
              <svg width="24" height="18" viewBox="0 0 24 18" fill="#a8a8a6">
                {[0, 1, 2, 3].flatMap((c) => [0, 1, 2, 3].map((r) => <rect key={`${c}${r}`} x={c * 6.5} y={r * 4.8} width="3.600" height="3" />))}
              </svg>
            </Tool>
            <FolderMark label="emuladores" w={227} tw={132} />
            <FolderMark label="genericos" w={203} tw={111} />
            <SiteMark label="Página de inicio - Netflix" w={334} gap={8} ls={-0.2} icon={
              <svg width="36" height="36" viewBox="0 0 36 36">
                <rect width="36" height="36" rx="7" fill="#cfcfcd" />
                <path d="M9 2h5v32H9zM22 2h5v32h-5z" fill="#a3271d" />
                <path d="M9 2h5.500L27 34h-5.500z" fill="#d8392b" />
              </svg>} />
            <SiteMark label="YouTube" w={166} gap={11} ls={-0.6} icon={
              <svg width="32" height="22" viewBox="0 0 32 22"><rect width="32" height="22" rx="5" fill="#d03b27" /><path d="M12.500 6l8.500 5-8.500 5z" fill="#f2f2f2" /></svg>} />
            <SiteMark label="WhatsApp" w={187} gap={11} icon={
              <svg width="32" height="32" viewBox="0 0 32 32">
                <path d="M0 32l2.500-9A16 16 0 1 1 9 30z" fill="#e3e3e1" />
                <circle cx="16" cy="16" r="13" fill="#56b458" />
                <path d="M11 9c-3 2-1 7 3 11s9 5 10 2-3-4-4-4-2 2-3 1-4-3-4-4 1-2 1-3-2-4-3-3z" fill="#e9e9e7" />
              </svg>} />
            <SiteMark label="Apple" w={138} gap={11} ls={-0.5} icon={
              <svg width="31" height="31" viewBox="0 0 31 31">
                <circle cx="15.500" cy="15.500" r="15.500" fill="#dededc" />
                <g transform="translate(5.500 5)"><FaApple size={20} color="#2c2c2a" /></g>
              </svg>} />
            <SiteMark label="Anonimo - De... Scarlet NSP" w={371} gap={11} ls={-0.35} icon={
              <svg width="31" height="30" viewBox="0 0 31 30" fill="none" strokeWidth="2.200">
                <path d="M14 5Q8-1 3 3t1 12l9 9M14 9Q9 3 6 6t1 8l8 7M3 12l9 11" stroke="#4b90d6" />
                <path d="M15 8l9 10q4 6-1 9M19 6l8 10q5 8-1 12M14 12l8 9" stroke="#d8cb42" />
              </svg>} />
            <SiteMark label="NswRom.com ... Game Roms" w={375} gap={13} ls={-0.45} icon={
              <svg width="28" height="28" viewBox="0 0 28 28">
                <path d="M12.500 1.500H8Q1.500 1.500 1.500 8v12q0 6.500 6.500 6.500h4.500z" fill="none" stroke="#d23a28" strokeWidth="2.600" />
                <circle cx="7" cy="9" r="2.500" fill="#d23a28" />
                <path d="M16 0h4q8 0 8 8v12q0 8-8 8h-4z" fill="#d23a28" />
                <circle cx="22" cy="15.500" r="2.800" fill="#3b3b39" />
              </svg>} />
            <FolderMark label="contenido pa...programacion" w={405} tw={307} />
            <SiteMark label="VSCode Ya" w={200} gap={12} ls={-0.4} icon={
              <svg width="26" height="26" viewBox="0 0 26 26" fill="none" stroke="#a8a8a6" strokeWidth="1.800">
                <circle cx="13" cy="13" r="12" /><ellipse cx="13" cy="13" rx="5.500" ry="12" /><path d="M13 1v24M1 13h24M3 7h20M3 19h20" />
              </svg>} />
            <Overflow><Line w={25} h={23} sw={2.2}><path d="M2 1.500l9 10-9 10M13 1.500l9 10-9 10" /></Line></Overflow>
          </Bookmarks>

          <Tabs>
            <GitHubTab />
            <GitHubTab />
            <Tab $gap={10}><TabBadge $round><FcGoogle size={27} /></TabBadge>Google</Tab>
            <Tab $active $gap={11}>
              <svg width="32" height="32" viewBox="0 0 32 32">
                <rect width="32" height="32" fill="#171c28" />
                <g fill="none" strokeWidth="1.600">
                  <path d="M16 4l8 5v9l-8 5" stroke="#d2955a" /><path d="M16 4L8 9v9l8 5" stroke="#5a9fa0" /><path d="M16 8l-4 3v6l4 3 4-3v-6l-4-1" stroke="#b9a176" />
                </g>
                <text x="16" y="29.500" fill="#e8e8e8" fontSize="5.500" fontWeight="700" textAnchor="middle" fontFamily="Inter" textLength="28">JALVUR</text>
              </svg>
              Reflex App
            </Tab>
          </Tabs>
        </Chrome>

        <Viewport>
          <Page>
            <Nav>
              <NavLink>Formulario Inserción</NavLink>
              <NavLink>Tabla</NavLink>
              <NavLink>Generado y Encryptador</NavLink>
              <NavLink>Volver</NavLink>
              <Dashes>----</Dashes>
            </Nav>
            <Panel $w={1027} $h={549}>
              <Heading><Pixel>Lonigtud contraseña a geneara</Pixel></Heading>
              <NumberField>
                <NumberValue><Pixel>6</Pixel></NumberValue>
                <Steppers>
                  <Stepper><svg width="20" height="14" viewBox="0 0 20 14"><path d="M0 14L10 0l10 14z" fill="#1c1f2b" /></svg></Stepper>
                  <Stepper $dim><svg width="20" height="14" viewBox="0 0 20 14"><path d="M0 0l10 14L20 0z" fill="#1e2327" /></svg></Stepper>
                </Steppers>
              </NumberField>
              <PixelButton $bg="#9fcc5a" $edge="#60a341" $fg="#fff" $m="16px 0 0"><Pixel adv={34}>Generar</Pixel></PixelButton>
              <Field label="Contraseña generada" />
            </Panel>
            <PixelButton $bg="#f2d64e" $edge="#d99834" $fg="#22252a" $m="29px 0 31px"><Pixel adv={34}>Limpiar</Pixel></PixelButton>
            <Columns>
              <Panel $w={836} $h={1000} $seams>
                <Field label="Mensage a encriptar" />
                <Field label="Clave salida" />
                <Field label="Mensage encriptado" />
              </Panel>
              <Panel $w={836} $h={1000} $seams>
                <Field label="Mensage a desencriptar" />
                <Field label="Clave entrada" />
                <Field label="Mensage desencriptado" />
              </Panel>
            </Columns>
          </Page>
          <ScrollTrack><ScrollThumb /></ScrollTrack>
        </Viewport>
      </Window>

      <Dock>
        {slots(mainApps)}
        <DockRule $w={41} />
        {slots(recentApps)}
        <DockRule $w={39} />
        {slots(stacks)}
      </Dock>
    </Desktop>
  );
}
